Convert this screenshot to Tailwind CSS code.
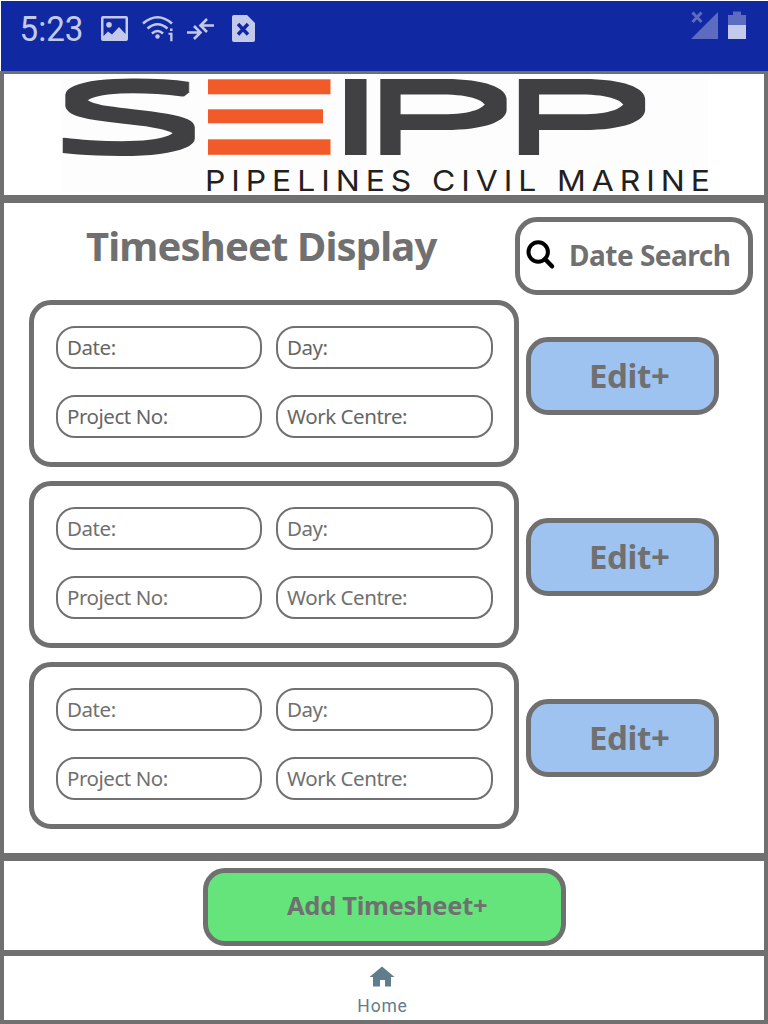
<!DOCTYPE html>
<html lang="en">
<head>
<meta charset="utf-8">
<title>Timesheet Display</title>
<script src="https://cdn.jsdelivr.net/npm/@tailwindcss/browser@4"></script>
</head>
<body class="w-[768px] h-[1024px] overflow-hidden bg-[#707070] text-[#707070] font-['Noto_Sans',sans-serif] flex flex-col">
  <!-- Status bar -->
  <header class="h-[71px] shrink-0 border-t border-l border-white bg-[#1029a2]">
    <svg class="block" width="767" height="70" viewBox="1 1 767 70" fill="#c3c9ea">
      <text x="19.500" y="41" font-family="Roboto" font-size="35" textLength="64" lengthAdjust="spacingAndGlyphs">5:23</text>
      <path fill-rule="evenodd" d="M103 16H126Q128 16 128 18V39Q128 41 126 41H103Q101 41 101 39V18Q101 16 103 16ZM103.500 18.500V36L108 31.500L112 34.500L119 27L125.500 34V18.500ZM109 22a2.800 2.800 0 1 1 0 5.600a2.800 2.800 0 1 1 0-5.600Z"/>
      <g fill="none" stroke="#c3c9ea" stroke-width="2.600">
        <path d="M143 23.500Q157.500 11 172 23.500M147.500 28.500Q157.500 20 167.500 28.500M152 33.500Q157.500 28.500 163 33.500"/>
        <path d="M187 32.500H200M194 26L200.500 32.500L194 39M214 25.500H201M207 19L200.500 25.500L207 32"/>
      </g>
      <circle cx="157.500" cy="36.500" r="2.200"/>
      <path d="M170 28.500h2.500v2.500h-2.500zM168.500 32.700h4v8.600h-2.300v-6.600h-1.700z"/>
      <path d="M234 15H247L255 23V40Q255 42 253 42H234Q232 42 232 40V17Q232 15 234 15Z"/>
      <path d="M238 24L248 34.500M248 24L238 34.500" stroke="#1029a2" stroke-width="3.400"/>
      <g fill="#5d6bc0"><path d="M718 12V39H691Z"/><path d="M733 11.500h8v3.500h5v10h-18V15h5z"/></g>
      <path d="M692.500 12.500L701.500 22M701.500 12.500L692.500 22" stroke="#5d6bc0" stroke-width="3"/>
      <path d="M728 25h18v14h-18z"/>
    </svg>
  </header>
  <!-- Company logo -->
  <section class="mt-[3px] mx-1 h-[121px] shrink-0 bg-white">
    <svg class="block overflow-visible" width="760" height="121" viewBox="4 74 760 121" role="img" aria-label="SEIPP Pipelines Civil Marine">
      <filter id="heavy" x="-5%" y="-5%" width="110%" height="110%"><feMorphology operator="dilate" radius="1 5"/></filter>
      <rect x="61" y="78" width="647" height="114" fill="#fdfdfd"/>
      <g fill="#414042" filter="url(#heavy)" font-weight="300">
        <text transform="translate(48 150) scale(3.200 1)" font-family="Noto Sans" font-size="92">S</text>
        <text transform="translate(356 150) scale(2.900 1)" font-family="Inter" font-size="90.800">P</text>
        <text transform="translate(494.500 150) scale(2.900 1)" font-family="Inter" font-size="90.800">P</text>
      </g>
      <rect x="345" y="79" width="21.500" height="76" fill="#414042"/>
      <g fill="#f15a29"><rect x="208" y="79.300" width="122.500" height="15"/><rect x="208" y="109.300" width="115" height="14"/><rect x="208" y="139.300" width="122.500" height="15.500"/></g>
      <text transform="translate(205 191.300) scale(1.100 1)" font-family="Inter" font-weight="400" font-size="29" fill="#231f20" textLength="459">PIPELINES CIVIL MARINE</text>
    </svg>
  </section>
  <!-- Timesheets -->
  <main class="mt-2 mx-1 h-[650px] shrink-0 bg-white pl-[25px] pr-[11px]">
    <div class="flex justify-between h-[97px] pt-[14px]">
      <h1 class="ml-[57px] mt-[1px] h-[56px] leading-[56px] text-[40px] font-bold whitespace-nowrap tracking-[-0.850px]">Timesheet Display</h1>
      <button class="w-[238px] h-[78px] border-5 border-[#707070] rounded-[22px] flex items-center pl-[6px] pb-[2px] bg-white">
        <svg class="shrink-0" width="30" height="30" viewBox="0 0 30 30" fill="none" stroke="#000"><circle cx="12.200" cy="12" r="9.700" stroke-width="4"/><path d="M19 19L26 26.300" stroke-width="4.500" stroke-linecap="round"/></svg>
        <span class="ml-[13px] text-[28px] font-bold whitespace-nowrap tracking-[-0.500px]">Date Search</span>
      </button>
    </div>
    <div class="flex flex-col gap-[14px]">
      <div class="flex gap-[7px] h-[167px]">
        <div class="w-[490px] border-5 border-[#707070] rounded-[22px] pl-[22px] pt-[21px] grid grid-cols-[206px_217px] grid-rows-[43px_43px] gap-x-[14px] gap-y-[26px] text-[20.500px] tracking-[-0.450px] text-[#666666]">
          <div class="border-2 border-[#707070] rounded-[19px] pl-[9px] leading-[39px]">Date:</div>
          <div class="border-2 border-[#707070] rounded-[19px] pl-[9px] leading-[39px]">Day:</div>
          <div class="border-2 border-[#707070] rounded-[19px] pl-[9px] leading-[39px]">Project No:</div>
          <div class="border-2 border-[#707070] rounded-[19px] pl-[9px] leading-[39px]">Work Centre:</div>
        </div>
        <button class="mt-[37px] w-[193px] h-[78px] border-5 border-[#707070] rounded-[22px] bg-[#9ec3f0] text-[33px] font-bold text-left pl-[58px] tracking-[-0.400px]">Edit+</button>
      </div>
      <div class="flex gap-[7px] h-[167px]">
        <div class="w-[490px] border-5 border-[#707070] rounded-[22px] pl-[22px] pt-[21px] grid grid-cols-[206px_217px] grid-rows-[43px_43px] gap-x-[14px] gap-y-[26px] text-[20.500px] tracking-[-0.450px]">
          <div class="border-2 border-[#707070] rounded-[19px] pl-[9px] leading-[39px]">Date:</div>
          <div class="border-2 border-[#707070] rounded-[19px] pl-[9px] leading-[39px]">Day:</div>
          <div class="border-2 border-[#707070] rounded-[19px] pl-[9px] leading-[39px]">Project No:</div>
          <div class="border-2 border-[#707070] rounded-[19px] pl-[9px] leading-[39px]">Work Centre:</div>
        </div>
        <button class="mt-[37px] w-[193px] h-[78px] border-5 border-[#707070] rounded-[22px] bg-[#9ec3f0] text-[33px] font-bold text-left pl-[58px] tracking-[-0.400px]">Edit+</button>
      </div>
      <div class="flex gap-[7px] h-[167px]">
        <div class="w-[490px] border-5 border-[#707070] rounded-[22px] pl-[22px] pt-[21px] grid grid-cols-[206px_217px] grid-rows-[43px_43px] gap-x-[14px] gap-y-[26px] text-[20.500px] tracking-[-0.450px]">
          <div class="border-2 border-[#707070] rounded-[19px] pl-[9px] leading-[39px]">Date:</div>
          <div class="border-2 border-[#707070] rounded-[19px] pl-[9px] leading-[39px]">Day:</div>
          <div class="border-2 border-[#707070] rounded-[19px] pl-[9px] leading-[39px]">Project No:</div>
          <div class="border-2 border-[#707070] rounded-[19px] pl-[9px] leading-[39px]">Work Centre:</div>
        </div>
        <button class="mt-[37px] w-[193px] h-[78px] border-5 border-[#707070] rounded-[22px] bg-[#9ec3f0] text-[33px] font-bold text-left pl-[58px] tracking-[-0.400px]">Edit+</button>
      </div>
    </div>
  </main>
  <section class="mt-2 mx-1 h-[89px] shrink-0 bg-white pt-[7px] pl-[199px]">
    <button class="w-[363px] h-[78px] border-5 border-[#707070] rounded-[22px] bg-[#66e47c] text-[25.500px] font-bold text-left pl-[79px] pb-1 whitespace-nowrap tracking-[-0.300px]">Add Timesheet+</button>
  </section>
  <!-- Bottom navigation -->
  <nav class="mt-[6px] mx-1 h-[64px] shrink-0 bg-white flex flex-col items-center pt-[10px] pr-1 text-[#5f7d8c]">
    <svg width="26" height="22" viewBox="0 0 26 22" fill="currentColor"><path d="M13 .500L25.500 11H22V20.500H16V14H11V20.500H4V11H.500Z"/></svg>
    <span class="font-['Roboto'] text-[17.500px] leading-[20px] mt-[8px] ml-[1px] tracking-[0.800px]">Home</span>
  </nav>
</body>
</html>
